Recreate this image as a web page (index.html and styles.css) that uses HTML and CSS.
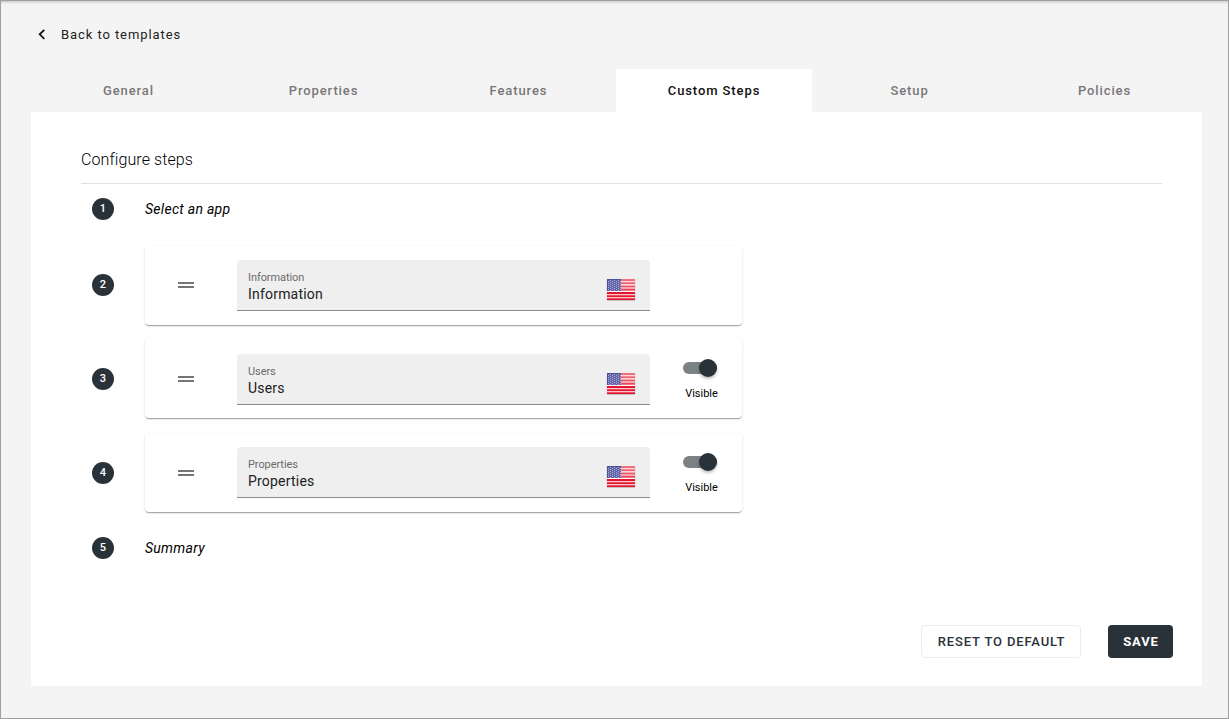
FILE: index.html
```
<!DOCTYPE html>
<html lang="en">
<head>
<meta charset="utf-8">
<title>Custom Steps</title>
<link rel="stylesheet" href="styles.css">
</head>
<body>
<svg class="defs" width="0" height="0" aria-hidden="true">
  <defs>
    <pattern id="stars" width="4" height="2" patternUnits="userSpaceOnUse">
      <rect width="4" height="2" fill="#6265a8"/>
      <path d="M0 0h1v1H0zM2 1h1v1H2z" fill="#a9abd2"/>
    </pattern>
    <linearGradient id="gloss" x1="0" y1="0" x2="0" y2="1">
      <stop offset="0" stop-color="#fff" stop-opacity=".4"/>
      <stop offset="1" stop-color="#fff" stop-opacity=".2"/>
    </linearGradient>
    <symbol id="flag" viewBox="0 0 30 24">
      <rect x=".8" y="1.5" width="28.4" height="21.3" rx="1" fill="#000" opacity=".25"/>
      <rect x="1" y="1" width="28" height="21" rx=".5" fill="#fff"/>
      <path d="M1 1h28v2.2H1zM1 4.2h28v2.1H1zM1 7.4h28v2.1H1zM1 10.6h28v2.1H1zM1 14h28v2.2H1zM1 17.2h28v2.1H1zM1 20.2h28V22H1z" fill="#e5152d"/>
      <path d="M15 1h14v12H15z" fill="url(#gloss)"/>
      <rect x="1" y="1" width="14" height="12" fill="url(#stars)"/>
      <path d="M1.5 13V1.5H15" fill="none" stroke="#4d509c"/>
    </symbol>
    <symbol id="drag" viewBox="0 0 24 24">
      <path d="M20 9H4v2h16V9zM4 15h16v-2H4v2z" fill="#757575"/>
    </symbol>
  </defs>
</svg>
<div class="page">
  <a class="back">
    <svg class="back-icon" viewBox="0 0 8 12"><path d="M6.3 .8 1.7 5.3l4.6 4.5" fill="none" stroke="#111" stroke-width="1.8"/></svg>
    <span>Back to templates</span>
  </a>
  <nav class="tabs">
    <a class="tab">General</a>
    <a class="tab">Properties</a>
    <a class="tab">Features</a>
    <a class="tab tab-active">Custom Steps</a>
    <a class="tab">Setup</a>
    <a class="tab">Policies</a>
  </nav>
  <main class="panel">
    <h1 class="title">Configure steps</h1>
    <section class="steps">
      <div class="step step-fixed"><span class="num">1</span><em class="name">Select an app</em></div>
      <div class="step">
        <span class="num">2</span>
        <div class="card">
          <svg class="drag"><use href="#drag"/></svg>
          <div class="field">
            <div class="field-text"><span class="label">Information</span><span class="value">Information</span></div>
            <svg class="flag"><use href="#flag"/></svg>
          </div>
        </div>
      </div>
      <div class="step">
        <span class="num">3</span>
        <div class="card">
          <svg class="drag"><use href="#drag"/></svg>
          <div class="field">
            <div class="field-text"><span class="label">Users</span><span class="value">Users</span></div>
            <svg class="flag"><use href="#flag"/></svg>
          </div>
          <div class="toggle"><span class="track"><span class="thumb"></span></span><span class="toggle-label">Visible</span></div>
        </div>
      </div>
      <div class="step">
        <span class="num">4</span>
        <div class="card">
          <svg class="drag"><use href="#drag"/></svg>
          <div class="field">
            <div class="field-text"><span class="label">Properties</span><span class="value">Properties</span></div>
            <svg class="flag"><use href="#flag"/></svg>
          </div>
          <div class="toggle"><span class="track"><span class="thumb"></span></span><span class="toggle-label">Visible</span></div>
        </div>
      </div>
      <div class="step step-fixed"><span class="num">5</span><em class="name">Summary</em></div>
    </section>
    <footer class="actions">
      <button class="btn btn-outline">RESET TO DEFAULT</button>
      <button class="btn btn-primary">SAVE</button>
    </footer>
  </main>
</div>
</body>
</html>
```
FILE: styles.css
```
* { box-sizing: border-box; }
body { margin: 0; font-family: Roboto, "Liberation Sans", sans-serif; color: #111; }
.defs { display: block; height: 0; }
.page {
  height: 719px;
  padding: 22px 26px 32px 30px;
  border: 1px solid #a0a0a0;
  background: #f4f4f4;
  box-shadow: inset 0 3px 3px -2px rgba(0, 0, 0, .2);
  display: flex;
  flex-direction: column;
}
.back {
  display: flex;
  align-items: center;
  height: 23px;
  padding-left: 7px;
  font-size: 13px;
  letter-spacing: .92px;
  color: #222;
}
.back-icon { width: 8px; height: 12px; margin-right: 15px; }
.tabs { display: grid; grid-template-columns: 195px 195px 195px 196px 195px 195px; height: 43px; margin-top: 23px; flex: none; }
.tab {
  display: flex;
  align-items: center;
  justify-content: center;
  font-size: 13px;
  font-weight: 500;
  letter-spacing: .9px;
  color: #777;
}
.tab-active { background: #fff; color: #111; }
.panel {
  flex: 1;
  background: #fff;
  padding: 35px 29px 28px 50px;
  display: flex;
  flex-direction: column;
}
.title {
  margin: 0 11px 0 0;
  height: 37px;
  padding-top: 1px;
  border-bottom: 1px solid #dfdfdf;
  font-size: 16px;
  line-height: 24px;
  font-weight: 300;
  letter-spacing: .09px;
  color: #000;
}
.steps { display: flex; flex-direction: column; gap: 14.6px; padding: 0 0 0 11px; }
.step { display: flex; align-items: center; gap: 31px; }
.step-fixed { height: 22px; margin: 14.25px 0 11px; }
.step-fixed:last-child { margin-top: 10.3px; }
.num {
  width: 22px;
  height: 22px;
  border-radius: 50%;
  background: #293238;
  color: #fff;
  font-size: 11px;
  font-weight: 500;
  line-height: 21px;
  text-align: center;
}
.name { font-size: 14px; letter-spacing: .28px; color: #000; }
.card {
  width: 597px;
  height: 79px;
  padding-left: 28.5px;
  border-radius: 4px;
  display: flex;
  align-items: center;
  box-shadow: 0 2px 1px -1px rgba(0, 0, 0, .2), 0 1px 1px rgba(0, 0, 0, .14), 0 1px 3px rgba(0, 0, 0, .12);
}
.drag { width: 24px; height: 24px; margin-right: 39.5px; }
.field {
  width: 413px;
  height: 51px;
  margin-top: .2px;
  padding: 0 14.5px 0 11px;
  border-radius: 4px 4px 0 0;
  border-bottom: 1px solid #8c8c8c;
  background: #efefef;
  display: flex;
  justify-content: space-between;
}
.field-text { display: flex; flex-direction: column; padding-top: 11px; }
.label { font-size: 11px; line-height: 14px; color: #6b6b6b; letter-spacing: -.08px; }
.value { font-size: 14px; line-height: 18px; color: #212121; letter-spacing: .2px; }
.flag { width: 30px; height: 24px; margin-top: 18px; }
.toggle {
  width: 38px;
  margin-left: 32.5px;
  padding-top: 6px;
  display: flex;
  flex-direction: column;
  align-items: center;
  gap: 12px;
}
.track {
  width: 34px;
  height: 12px;
  border-radius: 6px;
  background: #7c8184;
  display: flex;
  align-items: center;
  justify-content: flex-end;
  margin-right: 3px;
}
.thumb {
  width: 18px;
  height: 18px;
  border-radius: 50%;
  background: #293238;
  box-shadow: 0 2px 3px rgba(0, 0, 0, .25);
}
.toggle-label { font-size: 11px; line-height: 16px; color: #000; }
.actions { margin-top: auto; display: flex; justify-content: flex-end; gap: 27px; }
.btn {
  height: 33px;
  padding: 0;
  border-radius: 4px;
  font: 500 13px Roboto, "Liberation Sans", sans-serif;
  letter-spacing: .86px;
}
.btn-outline { width: 160px; padding-left: 1px; border: 1px solid #ededed; background: #fff; color: #293238; }
.btn-primary { width: 65px; padding-left: 1px; border: 0; background: #293238; color: #fff; font-weight: 700; }
```
